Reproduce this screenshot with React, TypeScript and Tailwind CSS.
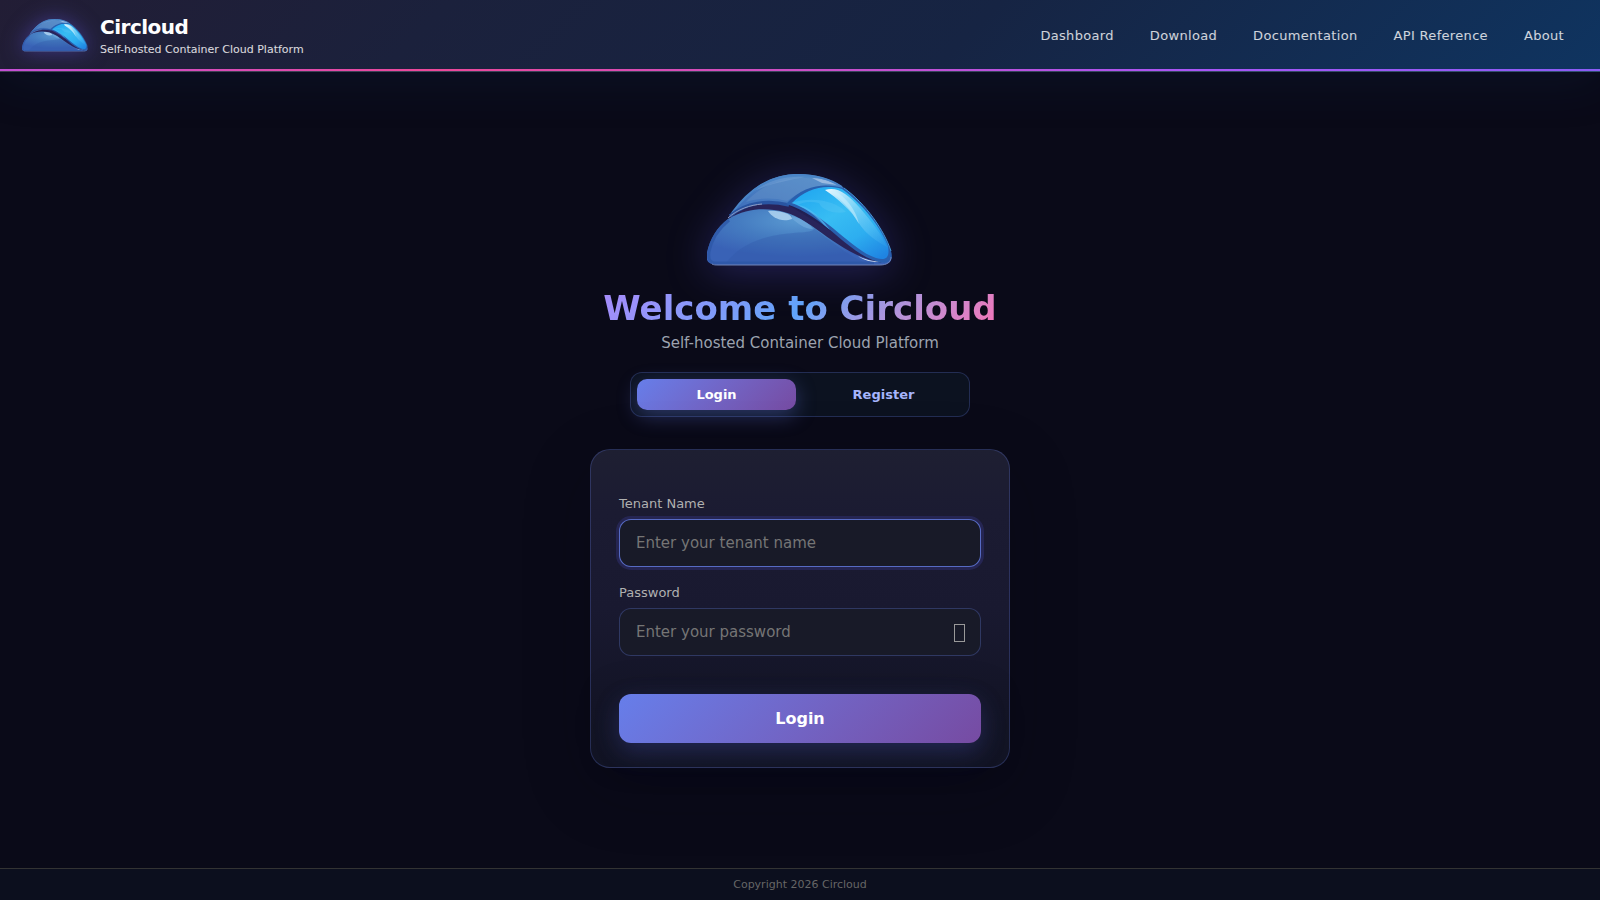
import React, { useState, FormEvent } from 'react'

const navLinks = ['Dashboard', 'Download', 'Documentation', 'API Reference', 'About']

const Logo: React.FC<{ id: string; className: string }> = ({ id, className }) => (
  <svg viewBox="1 0 186 92" className={className} role="img" aria-label="Circloud logo">
    <defs>
      <linearGradient id={`${id}-back`} x1="0" y1="1" x2="1" y2="0">
        <stop offset="0" stopColor="#3a68b8" />
        <stop offset="0.5" stopColor="#4a7fc2" />
        <stop offset="1" stopColor="#5592cd" />
      </linearGradient>
      <radialGradient id={`${id}-front`} cx="0.5" cy="0.2" r="0.65">
        <stop offset="0" stopColor="#5a9ad2" />
        <stop offset="0.5" stopColor="#457cc1" />
        <stop offset="1" stopColor="#3962b6" />
      </radialGradient>
      <linearGradient id={`${id}-right`} x1="0.1" y1="0" x2="0.9" y2="1">
        <stop offset="0" stopColor="#1fa6f0" />
        <stop offset="0.4" stopColor="#38bdf3" />
        <stop offset="0.7" stopColor="#2daef0" />
        <stop offset="1" stopColor="#1f84e2" />
      </linearGradient>
      <linearGradient id={`${id}-shine`} x1="0" y1="0" x2="1" y2="1">
        <stop offset="0" stopColor="#ffffff" stopOpacity="0.95" />
        <stop offset="0.4" stopColor="#a5e2fb" stopOpacity="0.6" />
        <stop offset="1" stopColor="#4fbdf5" stopOpacity="0.1" />
      </linearGradient>
    </defs>

    {/* dark band between the shells */}
    <path d="M22 44C36 31 57 26 81 30L174 87L160 89L90 50L31 42Z" fill="#28245a" />

    {/* back shell */}
    <path d="M22 44C27 37 30 33 34 29C50 9 70 0 92 0C110 0 126 5 138 14L82 31C57 26 40 30 22 44Z" fill={`url(#${id}-back)`} />
    <path d="M40 28C54 12 76 3 100 4C112 4 121 7 128 11C106 11 92 19 81 27C66 23 52 24 40 28Z" fill="#6e98cc" opacity="0.35" />
    <path d="M48 17C62 6 82 2 99 3C84 6 66 9 48 17Z" fill="#8bb4e0" opacity="0.3" />
    <path d="M106 4C116 4 125 7 131 11L116 9Z" fill="#b3cbea" opacity="0.7" />
    <path d="M26 39C44 14 66 1 92 1C110 1 124 5 136 13" fill="none" stroke="#4a85c8" strokeWidth="2" />
    <path d="M24 42C40 28 62 26 83 31" fill="none" stroke="#2955a2" strokeWidth="3.5" />

    {/* right shell */}
    <path d="M80 30C99 10 119 9 138 14C160 30 178 56 185 77C188 87 183 92 172 88C140 78 119 42 80 30Z" fill="#295fae" />
    <path d="M86 29C100 15 118 10 136 15C158 31 175 54 182 72C184 84 180 87 170 84C144 75 123 43 86 29Z" fill={`url(#${id}-right)`} />
    <path d="M85 29C106 22 130 27 140 38C132 40 117 38 113 29C104 27 97 28 92 31Z" fill="#62c9f6" opacity="0.3" />
    <path d="M91 31C101 31 115 43 124 56L118 51C110 42 101 35 91 31Z" fill="#54bdf5" opacity="0.7" />
    <path d="M119 16C131 12 142 20 154 34C166 48 176 61 181 73C172 68 160 61 152 48C146 37 131 24 119 16Z" fill={`url(#${id}-shine)`} />
    <path d="M129 17C140 23 150 36 153 50C145 36 136 25 123 17Z" fill="#d2f1fd" opacity="0.5" />
    <path d="M138 14C160 30 178 56 185 77" fill="none" stroke="#4397d6" strokeWidth="1" />

    {/* front shell */}
    <path d="M22 45C42 33 62 34 78 38C108 46 131 79 172 88C180 90 184 88 185 83C186 88 182 91 174 91L11 91C2 91 -1 86 1 78C4 65 11 53 22 45Z" fill={`url(#${id}-front)`} />
    <path d="M20 89C30 76 44 67 66 62C88 57 109 60 108 54C124 67 146 84 160 89Z" fill="#3159aa" opacity="0.35" />
    <path d="M62 37C74 36 86 40 86 45C75 49 66 43 62 37Z" fill="#b0d3f1" opacity="0.85" />
    <path d="M86 42C96 45 104 50 107 55C98 55 92 49 86 45Z" fill="#77ade0" opacity="0.6" />
    <path d="M23 46C12 55 5 66 3 78C2 86 4 89 11 89L168 89" fill="none" stroke="#2d58a8" strokeWidth="3" opacity="0.8" />
    <path d="M6 90C8 91 9 91 12 91L174 91C181 91 185 88 185 83" fill="none" stroke="#6f83b5" strokeWidth="1" />
    <path d="M22 44C32 35 44 31 56 30" fill="none" stroke="#8f9cc4" strokeWidth="1" />
    <path d="M152 82C158 85 166 88 174 87C166 89 158 86 152 82Z" fill="#e6edf8" />
  </svg>
)

const Header: React.FC = () => (
  <header className="relative flex h-[72px] items-center justify-between border-b border-white/15 bg-[linear-gradient(135deg,#221d35_0%,#1b213c_27%,#162443_60%,#0f3460_100%)] pr-[18px] pl-[22px] shadow-[0_8px_50px_#0f346033]">
    <div className="flex items-center gap-3">
      <Logo id="brand" className="w-[66px] drop-shadow-[0_0_10px_#5b4fd080]" />
      <div className="pt-[2px]">
        <div className="text-[20px] leading-6 font-bold tracking-tight">Circloud</div>
        <div className="mt-[3px] text-[11px] leading-4 text-white/85">Self-hosted Container Cloud Platform</div>
      </div>
    </div>
    <nav className="flex">
      {navLinks.map((label) => (
        <a key={label} href="#" className="px-[18px] text-[13px] tracking-wide text-white/80">
          {label}
        </a>
      ))}
    </nav>
    <div className="absolute inset-x-0 bottom-0 h-[2px] bg-[linear-gradient(90deg,#c44fd6_0%,#ec4899_27%,#a855f7_75%,#8b5cf6_100%)]" />
  </header>
)

const App: React.FC = () => {
  const [tab, setTab] = useState('Login')
  const [showPassword, setShowPassword] = useState(false)

  const handleSubmit = (e: FormEvent) => {
    e.preventDefault()
  }

  return (
    <div className="flex min-h-screen flex-col bg-[#0a0a18] font-['DejaVu_Sans',sans-serif] text-white">
      <Header />
      <main className="flex flex-1 flex-col items-center px-4 pt-[102px] pb-16">
        <Logo id="hero" className="w-[186px] drop-shadow-[0_6px_20px_#4c45b866]" />
        <h1 className="mt-[22px] bg-linear-135 from-[#a78bfa] via-[#60a5fa] to-[#f472b6] bg-clip-text text-[34px] leading-[41px] font-bold text-transparent">
          Welcome to Circloud
        </h1>
        <p className="mt-1 text-[15px] leading-5 text-[#9ca3af]">Self-hosted Container Cloud Platform</p>

        <div className="mt-[19px] flex w-full max-w-[340px] gap-2 rounded-xl border border-[#667eea40] bg-[#0c1220] p-[6px]">
          {['Login', 'Register'].map((name) => (
            <button
              key={name}
              type="button"
              onClick={() => setTab(name)}
              className={`h-[31px] flex-1 rounded-[10px] text-[13px] font-bold ${
                tab === name
                  ? 'bg-linear-135 from-[#667eea] to-[#764ba2] shadow-[0_6px_20px_#667eea59]'
                  : 'text-[#a5b4fc]'
              }`}
            >
              {name}
            </button>
          ))}
        </div>

        <form
          onSubmit={handleSubmit}
          className="mt-8 w-full max-w-[420px] rounded-[20px] border border-[#667eea40] bg-[linear-gradient(180deg,#1e1f32_0%,#1b1b32_20%,#191930_50%,#141527_80%,#121424_100%)] px-7 pt-[44px] pb-6 shadow-[0_20px_70px_#04051233]"
        >
          <label htmlFor="tenant" className="block text-[13px] leading-5 text-[#b0b0b0]">
            Tenant Name
          </label>
          <input
            id="tenant"
            type="text"
            placeholder="Enter your tenant name"
            className="mt-[5px] block h-12 w-full rounded-xl border border-[#667eeacc] bg-[#181a28] px-4 text-[15px] shadow-[0_0_0_3px_#4040a04d] outline-none placeholder:text-[#757575]"
          />
          <label htmlFor="password" className="mt-4 block text-[13px] leading-5 text-[#b0b0b0]">
            Password
          </label>
          <div className="relative mt-[5px]">
            <input
              id="password"
              type={showPassword ? 'text' : 'password'}
              placeholder="Enter your password"
              className="block h-12 w-full rounded-xl border border-[#667eea4d] bg-[#181a28] px-4 text-[15px] outline-none placeholder:text-[#757575]"
            />
            <button
              type="button"
              aria-label="Show password"
              onClick={() => setShowPassword(!showPassword)}
              className="absolute inset-y-0 right-4 flex items-center pt-[2px]"
            >
              <span className="block h-[18px] w-[11px] border border-[#999999]" />
            </button>
          </div>
          <button
            type="submit"
            className="mt-[38px] h-[49px] w-full rounded-xl bg-linear-135 from-[#667eea] to-[#764ba2] text-[16px] font-bold shadow-[0_8px_25px_#5558d04d,0_8px_36px_#0c141a80]"
          >
            Login
          </button>
        </form>
      </main>
      <footer className="border-t border-[#333333] bg-[#0c0f1e] py-2 text-center text-[11px] leading-[15px] text-[#666666]">
        Copyright 2026 Circloud
      </footer>
    </div>
  )
}

export default App
